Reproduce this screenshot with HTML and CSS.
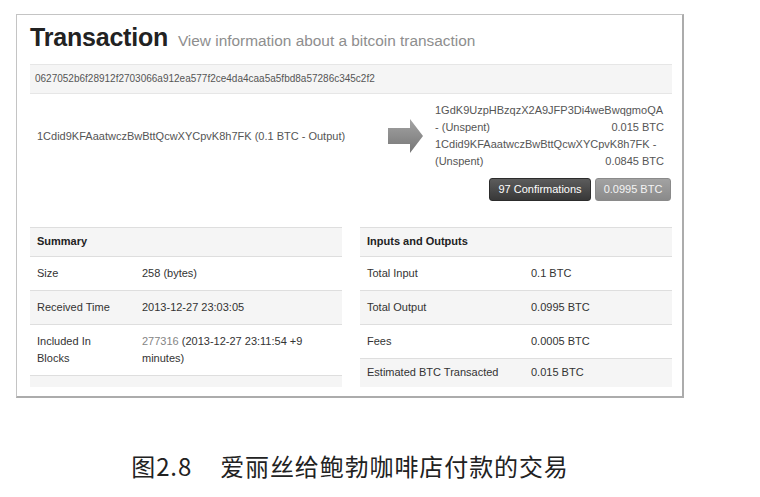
FILE: index.html
```html
<!DOCTYPE html>
<html lang="zh">
<head>
<meta charset="utf-8">
<title>Transaction</title>
<link rel="stylesheet" href="styles.css">
</head>
<body>
<div class="page">
  <div class="frame">
    <h1 class="title">Transaction <small class="subtitle">View information about a bitcoin transaction</small></h1>
    <div class="hash">0627052b6f28912f2703066a912ea577f2ce4da4caa5a5fbd8a57286c345c2f2</div>
    <div class="io">
      <div class="io-in">1Cdid9KFAaatwczBwBttQcwXYCpvK8h7FK (0.1 BTC - Output)</div>
      <svg class="arrow" width="35" height="36" viewBox="0 0 35 36">
        <defs>
          <linearGradient id="ag" x1="0" y1="0" x2="0" y2="1">
            <stop offset="0" stop-color="#a4a4a4"/>
            <stop offset="1" stop-color="#767676"/>
          </linearGradient>
        </defs>
        <path d="M0 10 H22 V1 L35 18 L22 35 V26 H0 Z" fill="url(#ag)"/>
      </svg>
      <div class="io-out">
        <div class="out-line">1GdK9UzpHBzqzX2A9JFP3Di4weBwqgmoQA</div>
        <div class="out-line out-split"><span>- (Unspent)</span><span>0.015 BTC</span></div>
        <div class="out-line">1Cdid9KFAaatwczBwBttQcwXYCpvK8h7FK -</div>
        <div class="out-line out-split"><span>(Unspent)</span><span>0.0845 BTC</span></div>
      </div>
    </div>
    <div class="btns">
      <span class="btn btn-dark">97 Confirmations</span>
      <span class="btn btn-light">0.0995 BTC</span>
    </div>
    <div class="panels">
      <div class="panel">
        <div class="row head"><div class="cell">Summary</div></div>
        <div class="row"><div class="cell c1">Size</div><div class="cell">258 (bytes)</div></div>
        <div class="row striped"><div class="cell c1">Received Time</div><div class="cell">2013-12-27 23:03:05</div></div>
        <div class="row"><div class="cell c1">Included In Blocks</div><div class="cell"><span class="link">277316</span> (2013-12-27 23:11:54 +9 minutes)</div></div>
        <div class="row striped stub"></div>
      </div>
      <div class="panel">
        <div class="row head"><div class="cell">Inputs and Outputs</div></div>
        <div class="row"><div class="cell c2">Total Input</div><div class="cell">0.1 BTC</div></div>
        <div class="row striped"><div class="cell c2">Total Output</div><div class="cell">0.0995 BTC</div></div>
        <div class="row"><div class="cell c2">Fees</div><div class="cell">0.0005 BTC</div></div>
        <div class="row striped last"><div class="cell c2">Estimated BTC Transacted</div><div class="cell">0.015 BTC</div></div>
      </div>
    </div>
  </div>
  <p class="caption">图2.8<span class="cap-body">爱丽丝给鲍勃咖啡店付款的交易</span></p>
</div>
</body>
</html>
```
FILE: styles.css
```css
* { box-sizing: border-box; }
html, body { margin: 0; padding: 0; background: #fff; }
body { font-family: "Liberation Sans", Arial, sans-serif; color: #333; }

.page { padding: 14px 0 0 16px; width: 684px; }

.frame {
  width: 668px;
  height: 384px;
  border-top: 1px solid #c4c4c4;
  border-left: 1px solid #c4c4c4;
  border-right: 2px solid #acacac;
  border-bottom: 2px solid #acacac;
  padding: 8px 10px 0 13px;
  background: #fff;
}

.title {
  margin: 0;
  height: 28px;
  font-size: 25px;
  line-height: 28px;
  font-weight: bold;
  color: #222;
  letter-spacing: -0.2px;
}
.subtitle {
  font-size: 15.4px;
  line-height: 28px;
  font-weight: normal;
  color: #8e8e8e;
  margin-left: 3px;
  letter-spacing: 0;
}

.hash {
  margin-top: 13px;
  height: 30px;
  line-height: 28px;
  padding-left: 5px;
  background: #f5f5f5;
  border-top: 1px solid #e6e6e6;
  border-bottom: 1px solid #e6e6e6;
  font-size: 10px;
  color: #555;
}

.io {
  display: flex;
  align-items: center;
  padding-top: 8px;
  font-size: 11px;
  color: #555;
}
.io-in { width: 358px; padding-left: 7px; }
.arrow { display: block; flex: none; }
.io-out { width: 229px; margin-left: 12px; }
.out-line { line-height: 17px; white-space: nowrap; }
.out-split { display: flex; justify-content: space-between; }

.btns {
  display: flex;
  justify-content: flex-end;
  gap: 4px;
  margin-top: 8px;
  padding-right: 1px;
}
.btn {
  display: block;
  height: 23px;
  line-height: 21px;
  border-radius: 3px;
  font-size: 11px;
  color: #fff;
  text-align: center;
}
.btn-dark {
  width: 102px;
  background: linear-gradient(#5c5c5c, #383838);
  border: 1px solid #2c2c2c;
}
.btn-light {
  width: 76px;
  background: linear-gradient(#a2a2a2, #8a8a8a);
  border: 1px solid #8a8a8a;
  color: #f4f4f4;
}

.panels {
  display: flex;
  gap: 18px;
  margin-top: 26px;
}
.panel { width: 312px; font-size: 11px; color: #333; }
.row {
  display: flex;
  border-top: 1px solid #dedede;
  background: #fff;
}
.row.striped, .row.head { background: #f5f5f5; }
.row.head { font-weight: bold; color: #222; }
.row.head .cell { padding-top: 5px; padding-bottom: 6px; }
.cell {
  padding: 8px 7px;
  line-height: 17px;
}
.c1 { width: 105px; flex: none; padding-right: 24px; }
.c2 { width: 164px; flex: none; }
.row .cell:last-child { flex: 1; }
.row.stub { height: 12px; }
.row.last .cell { padding-top: 5px; padding-bottom: 6px; }
.link { color: #858585; }

.caption {
  margin: 52px 0 0 0;
  width: 668px;
  text-align: center;
  font-family: "Noto Sans CJK SC", "Noto Sans", sans-serif;
  font-size: 24px;
  line-height: 32px;
  letter-spacing: 0.9px;
  color: #222;
}
.cap-body { margin-left: 28px; }
```
